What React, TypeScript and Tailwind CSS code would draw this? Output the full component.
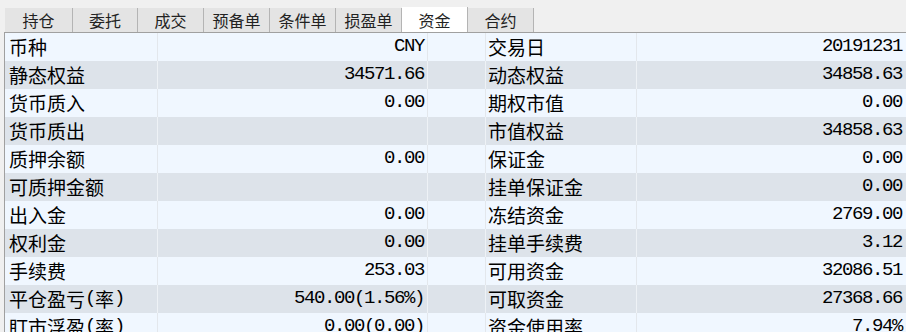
import React from 'react'

const tabs = ['持仓', '委托', '成交', '预备单', '条件单', '损盈单', '资金', '合约']

const rows: [string, string, string, string][] = [
  ['币种', 'CNY', '交易日', '20191231'],
  ['静态权益', '34571.66', '动态权益', '34858.63'],
  ['货币质入', '0.00', '期权市值', '0.00'],
  ['货币质出', '', '市值权益', '34858.63'],
  ['质押余额', '0.00', '保证金', '0.00'],
  ['可质押金额', '', '挂单保证金', '0.00'],
  ['出入金', '0.00', '冻结资金', '2769.00'],
  ['权利金', '0.00', '挂单手续费', '3.12'],
  ['手续费', '253.03', '可用资金', '32086.51'],
  ['平仓盈亏(率)', '540.00(1.56%)', '可取资金', '27368.66'],
  ['盯市浮盈(率)', '0.00(0.00)', '资金使用率', '7.94%'],
]

// ascii runs go in mono (half width), the rest in the CJK face
const Mixed = ({ text }: { text: string }) => {
  const parts = text.split(/([\x00-\x7f]+)/).filter(Boolean)
  return (
    <>
      {parts.map((p, i) =>
        /^[\x00-\x7f]+$/.test(p) ? (
          <span key={i} className="font-['Liberation_Mono',monospace] text-[19px] tracking-[-1.4px]">
            {p}
          </span>
        ) : (
          <span key={i} className="font-['Noto_Sans_CJK_SC',sans-serif] text-[19px]">
            {p}
          </span>
        )
      )}
    </>
  )
}

const Tab = ({ label, index }: { label: string; index: number }) => {
  const active = label === '资金'
  const width = index === 0 ? 'w-[68px]' : index === 1 ? 'w-[65px]' : 'w-[66px]'

  return (
    <div
      className={`${width} flex items-center justify-center border-r border-[#b4b4b4]
        font-['Noto_Sans_CJK_SC',sans-serif] text-[16px] leading-none text-[#222]
        ${active ? 'h-[25px] bg-white' : 'h-[24px] bg-[#e4e4e4]'}`}
    >
      {label}
    </div>
  )
}

export default function App() {
  return (
    <div className="w-[906px] h-[332px] overflow-hidden bg-[#f0f0f0] text-black">
      <div className="h-[32px] flex items-end pl-[5px]">
        {tabs.map((t, i) => (
          <Tab key={t} label={t} index={i} />
        ))}
      </div>

      <div className="ml-[4px] border-t border-l border-[#a0a0a0]">
        {rows.map((r, i) => {
          const odd = i % 2 === 0
          const bg = odd ? 'bg-[#f0f7ff]' : 'bg-[#dde3ea]'
          const line = odd ? 'border-[#e3e7ec]' : 'border-[#eef2f6]'

          return (
            <div
              key={r[0]}
              className={`grid grid-cols-[153px_270px_58px_151px_1fr] h-[28px] leading-none ${bg}`}
            >
              <div className={`flex items-center pl-[4px] pb-[2px] border-r ${line}`}>
                <Mixed text={r[0]} />
              </div>
              <div className={`flex items-center justify-end pr-[3px] pb-[2px] border-r ${line}`}>
                <Mixed text={r[1]} />
              </div>
              <div className={`border-r ${line}`} />
              <div className={`flex items-center pl-[2px] pb-[2px] border-r ${line}`}>
                <Mixed text={r[2]} />
              </div>
              <div className="flex items-center justify-end pr-[4px] pb-[2px]">
                <Mixed text={r[3]} />
              </div>
            </div>
          )
        })}
      </div>
    </div>
  )
}
